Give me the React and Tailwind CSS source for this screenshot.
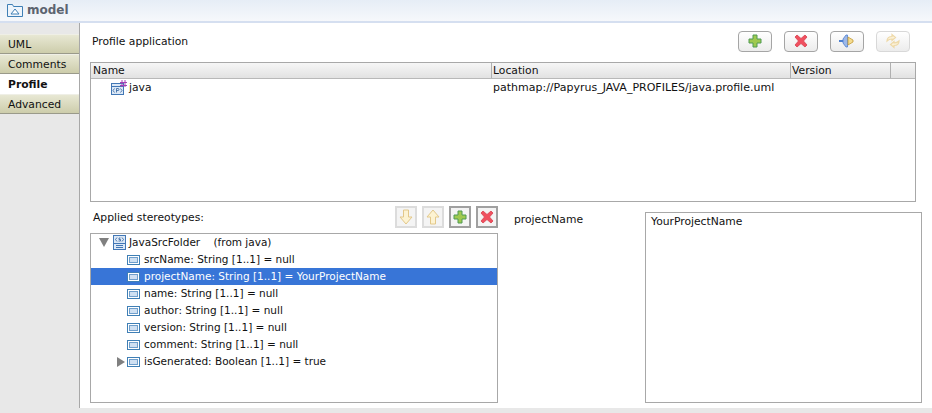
import React from "react";

const tabs = ["UML", "Comments", "Profile", "Advanced"];

const attributes = [
  { label: "srcName: String [1..1] = null" },
  { label: "projectName: String [1..1] = YourProjectName", selected: true },
  { label: "name: String [1..1] = null" },
  { label: "author: String [1..1] = null" },
  { label: "version: String [1..1] = null" },
  { label: "comment: String [1..1] = null" },
  { label: "isGenerated: Boolean [1..1] = true", expandable: true },
];

function PlusIcon({ size = 14 }) {
  return (
    <svg width={size} height={size} viewBox="0 0 14 14">
      <path d="M5 1h4v4h4v4H9v4H5V9H1V5h4z" fill="#9fc94f" stroke="#4f9a52" strokeWidth="1" />
    </svg>
  );
}

function CrossIcon({ size = 14 }) {
  return (
    <svg width={size} height={size} viewBox="0 0 14 14">
      <path d="M3 1l4 3.500L11 1l2 2-3.500 4L13 11l-2 2-4-3.500L3 13l-2-2 3.500-4L1 3z" fill="#f0505f" stroke="#d8404e" strokeWidth="0.8" />
    </svg>
  );
}

function ConnectorIcon() {
  return (
    <svg width="16" height="14" viewBox="0 0 16 14">
      <path d="M0 6h4v2H0z" fill="#4d7fd0" />
      <path d="M4 5l3-4h1.500v12H7L4 9z" fill="#9db8e8" stroke="#4d7fd0" strokeWidth="0.8" />
      <path d="M9 3l5 3v2l-5 3z" fill="#f4dc90" stroke="#c49a38" strokeWidth="0.8" />
    </svg>
  );
}

function SyncIcon() {
  return (
    <svg width="16" height="16" viewBox="0 0 16 16" fill="none" stroke="#eed9a8" strokeWidth="1.200">
      <path d="M2 8c0-3 2-4.500 5-4.500V1.500l3.500 3L7 7.500V6C5 6 3.500 6.500 2 8z" fill="#fbf1d8" />
      <path d="M14 8c0 3-2 4.500-5 4.500v2l-3.500-3L9 8.500V10c2 0 3.500-.5 5-2z" fill="#fbf1d8" />
    </svg>
  );
}

function ArrowIcon({ up }) {
  return (
    <svg width="14" height="16" viewBox="0 0 14 16" className={up ? "" : "rotate-180"}>
      <path d="M7 1l6 7H9.500v7h-5V8H1z" fill="#fdf3d2" stroke="#e3c88a" strokeWidth="1" />
    </svg>
  );
}

function FolderIcon() {
  return (
    <svg width="16" height="13" viewBox="0 0 16 13" fill="none">
      <path d="M0.500 12.500V0.500h5l1 2h9v10z" fill="#eef4fb" stroke="#3f7fb5" />
      <path d="M4 10l4-5 4 5z" fill="#fff" stroke="#3f7fb5" />
    </svg>
  );
}

function ProfileIcon() {
  return (
    <svg width="16" height="15" viewBox="0 0 16 15" fill="none">
      <rect x="0.500" y="3.500" width="12" height="11" fill="#dce8f6" stroke="#4277b5" />
      <path d="M0.500 6.500h12" stroke="#4277b5" />
      <path d="M3.500 8.500L2 10.500l1.500 2M9.500 8.500l1.500 2-1.500 2" stroke="#2f5f9c" strokeWidth="0.800" />
      <path d="M5.500 12.500v-4H7a1 1 0 010 2H5.500" stroke="#2f5f9c" strokeWidth="0.800" />
      <path d="M11 0v7M14 0v7M9 2.500h7M9 5.500h7" stroke="#a63fb5" />
    </svg>
  );
}

function StereotypeIcon() {
  return (
    <svg width="14" height="15" viewBox="0 0 14 15" fill="none">
      <rect x="0.500" y="0.500" width="12" height="14" fill="#dce8f6" stroke="#4277b5" />
      <path d="M0.500 8.500h12M3 10.500h7M3 12.500h7" stroke="#4277b5" />
      <path d="M4 2.500L2.500 4.500 4 6.500M9 2.500l1.500 2L9 6.500M7.500 3H6v1.500h1.500V6H5.500" stroke="#2f5f9c" strokeWidth="0.800" />
    </svg>
  );
}

function AttributeIcon() {
  return (
    <svg width="13" height="10" viewBox="0 0 13 10" fill="none">
      <rect x="0.500" y="0.500" width="12" height="9" fill="#fff" stroke="#3f7fb5" />
      <rect x="2.500" y="2.500" width="8" height="5" fill="#cfe0f2" stroke="#6f9fcc" />
    </svg>
  );
}

function ToolButton({ children, disabled }) {
  return (
    <button
      className={`flex h-[21px] w-[34px] items-center justify-center rounded-[4px] border bg-gradient-to-b from-white to-[#ececec] ${
        disabled ? "border-[#d8d8d8]" : "border-[#a5a5a5]"
      }`}
    >
      {children}
    </button>
  );
}

function SquareButton({ children, disabled }) {
  return (
    <button
      className={`flex h-[22px] w-[22px] items-center justify-center border-2 bg-[#f4f4f4] ${
        disabled ? "border-[#dcdcdc]" : "border-[#a0a0a0]"
      }`}
    >
      {children}
    </button>
  );
}

export default function App() {
  return (
    <div className="flex h-[413px] w-[932px] flex-col overflow-hidden bg-white font-['DejaVu_Sans',sans-serif] text-[10.75px] leading-[17px] text-[#111]">
      {/* Title bar */}
      <div className="flex h-[23px] shrink-0 items-center gap-[4px] border-b-2 border-[#d5dff0] bg-gradient-to-b from-[#e6edf6] to-[#f6f8fb] pl-[7px]">
        <FolderIcon />
        <span className="text-[12px] font-bold text-[#5c6470]">model</span>
      </div>

      <div className="flex min-h-0 flex-1">
        {/* Tabs */}
        <div className="w-[80px] shrink-0 border-r border-[#a8a8a8] bg-[#e8e8e8] pt-[11px]">
          {tabs.map((tab) =>
            tab === "Profile" ? (
              <div key={tab} className="flex h-5 items-center bg-white pl-2 font-bold">
                {tab}
              </div>
            ) : (
              <div
                key={tab}
                className="flex h-5 items-center border-y border-t-[#efefe6] border-b-[#9a9a8a] bg-gradient-to-b from-[#e8e8d4] to-[#cdcdab] pl-2"
              >
                {tab}
              </div>
            )
          )}
        </div>

        {/* Main */}
        <div className="min-w-0 flex-1 pl-[10px] pr-[10px]">
          <div className="flex h-[39px] items-center justify-between pb-[3px] pl-[2px] pr-[12px]">
            <span>Profile application</span>
            <div className="flex gap-[12px]">
              <ToolButton>
                <PlusIcon />
              </ToolButton>
              <ToolButton>
                <CrossIcon />
              </ToolButton>
              <ToolButton>
                <ConnectorIcon />
              </ToolButton>
              <ToolButton disabled>
                <SyncIcon />
              </ToolButton>
            </div>
          </div>

          {/* Profile table */}
          <div className="mr-[6px] h-[140px] border border-[#a8a8a8]">
            <div className="grid h-[16px] grid-cols-[400px_299px_100px_1fr] items-center border-b border-[#b8b8b8] bg-gradient-to-b from-[#f6f6f6] to-[#e2e2e2] leading-none">
              <div className="h-full pl-[2px] pt-[3px]">Name</div>
              <div className="h-full border-l border-[#b0b0b0] pl-[1px] pt-[3px]">Location</div>
              <div className="h-full border-l border-[#b0b0b0] pl-[1px] pt-[3px]">Version</div>
              <div className="h-full border-l border-[#b0b0b0]" />
            </div>
            <div className="grid h-[17px] grid-cols-[400px_1fr] items-center">
              <div className="flex items-center gap-[2px] pl-[20px]">
                <ProfileIcon />
                <span>java</span>
              </div>
              <div className="pl-[2px] text-[11px]">pathmap://Papyrus_JAVA_PROFILES/java.profile.uml</div>
            </div>
          </div>

          {/* Applied stereotypes */}
          <div className="flex">
            <div className="w-[408px] shrink-0">
              <div className="flex h-[31px] items-center justify-between pb-[1px] pl-[3px]">
                <span>Applied stereotypes:</span>
                <div className="flex gap-[5px]">
                  <SquareButton disabled>
                    <ArrowIcon />
                  </SquareButton>
                  <SquareButton disabled>
                    <ArrowIcon up />
                  </SquareButton>
                  <SquareButton>
                    <PlusIcon />
                  </SquareButton>
                  <SquareButton>
                    <CrossIcon />
                  </SquareButton>
                </div>
              </div>
              <div className="h-[170px] border border-[#a8a8a8] text-[10.5px]">
                <div className="flex h-[17px] items-center">
                  <span className="ml-[8px] h-0 w-0 border-x-[5px] border-t-[9px] border-x-transparent border-t-[#808080]" />
                  <span className="ml-[4px] mr-[2px]">
                    <StereotypeIcon />
                  </span>
                  <span className="whitespace-pre">JavaSrcFolder    (from java)</span>
                </div>
                {attributes.map((attr) => (
                  <div
                    key={attr.label}
                    className={`flex h-[17px] items-center pl-[36px] ${attr.selected ? "bg-[#3875d7] text-white" : ""}`}
                  >
                    <span className="relative mr-[4px] flex">
                      {attr.expandable && (
                        <span className="absolute left-[-10px] top-0 h-0 w-0 border-y-[5px] border-l-[8px] border-y-transparent border-l-[#808080]" />
                      )}
                      <AttributeIcon />
                    </span>
                    <span>{attr.label}</span>
                  </div>
                ))}
              </div>
            </div>

            <div className="flex-1 pl-[16px] pt-[9px]">projectName</div>

            <div className="mt-[10px] h-[191px] w-[277px] shrink-0 border border-[#a8a8a8] pl-[5px]">
              YourProjectName
            </div>
          </div>
        </div>
      </div>

      <div className="h-[5px] shrink-0 bg-[#e8e8e8]" />
    </div>
  );
}
